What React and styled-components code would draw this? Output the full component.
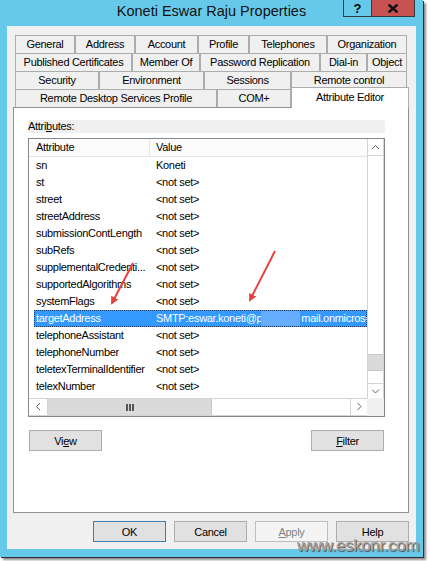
import React from 'react';
import styled, { createGlobalStyle } from 'styled-components';

const Global = createGlobalStyle`
  html, body { margin: 0; padding: 0; background: #ffffff; }
  body {
    font-family: "Liberation Sans", Arial, sans-serif;
    font-size: 11px;
    letter-spacing: -0.3px;
    color: #000;
  }
  u { text-decoration: underline; text-underline-offset: 1px; }
`;

const Page = styled.div`
  position: relative;
  width: 430px;
  height: 561px;
  overflow: hidden;
`;

const Window = styled.div`
  width: 423px;
  height: 557px;
  background: #67c9ea;
  display: flex;
  flex-direction: column;
  box-shadow: 1px 1px 0 #2e2e2e, 3px 3px 2px rgba(0, 0, 0, 0.45);
`;

const TitleBar = styled.div`
  height: 26px;
  flex: none;
  display: grid;
  grid-template-columns: 1fr auto 1fr;
  align-items: start;
`;

const Title = styled.div`
  padding-top: 1px;
  font-family: "Liberation Sans", Arial, sans-serif;
  font-size: 14.5px;
  letter-spacing: 0;
  line-height: 20px;
  color: #111;
  white-space: nowrap;
`;

const Controls = styled.div`
  justify-self: end;
  display: flex;
  margin-right: 8px;
`;

const CaptionButton = styled.div`
  box-sizing: border-box;
  height: 17px;
  border: 1px solid #2f3b40;
  border-top: none;
  display: flex;
  align-items: center;
  justify-content: center;
  font-weight: bold;
  font-size: 13px;
  letter-spacing: 0;
`;

const HelpButton = styled(CaptionButton)`
  width: 28px;
  border-right: none;
  background: transparent;
`;

const CloseButton = styled(CaptionButton)`
  width: 44px;
  background: #c75050;
`;

const Client = styled.div`
  flex: 1;
  margin: 0 7px 8px;
  background: #f0f0f0;
  padding: 9px 7px 0 6px;
  display: flex;
  flex-direction: column;
`;

const TabStrip = styled.div`
  margin-left: 2px;
  display: flex;
  flex-direction: column;
`;

const TabRow = styled.div`
  display: flex;
  height: 18px;
`;

const Tab = styled.div`
  box-sizing: border-box;
  width: ${(p) => p.$w}px;
  flex: none;
  border: 1px solid #acacac;
  border-bottom: none;
  background: ${(p) => (p.$active ? '#ffffff' : '#f0f0f0')};
  text-align: center;
  white-space: nowrap;
  line-height: ${(p) => (p.$active ? '19px' : '17px')};
  height: ${(p) => (p.$active ? '21px' : '18px')};
  margin-top: ${(p) => (p.$active ? '-2px' : '0')};
  position: ${(p) => (p.$active ? 'relative' : 'static')};
  z-index: ${(p) => (p.$active ? 2 : 'auto')};
`;

const Panel = styled.div`
  box-sizing: border-box;
  width: 396px;
  height: 406px;
  background: #ffffff;
  border: 1px solid #8f9090;
  padding: 12px 23px 0 14px;
  display: flex;
  flex-direction: column;
`;

const GroupLabel = styled.div`
  height: 13px;
  line-height: 13px;
  background: #f0f0f0;
`;

const ListView = styled.div`
  box-sizing: border-box;
  margin-top: 5px;
  height: 279px;
  border: 1px solid #828790;
  display: grid;
  grid-template-columns: 1fr 17px;
  grid-template-rows: 1fr 18px;
`;

const ListBody = styled.div`
  overflow: hidden;
  display: flex;
  flex-direction: column;
  background: #fff;
`;

const Header = styled.div`
  box-sizing: border-box;
  height: 18px;
  flex: none;
  display: flex;
  background: #fcfcfc;
  border-bottom: 1px solid #e5e5e5;
`;

const HeaderCell = styled.div`
  box-sizing: border-box;
  width: ${(p) => (p.$w ? `${p.$w}px` : 'auto')};
  flex: ${(p) => (p.$w ? 'none' : '1')};
  padding-left: ${(p) => (p.$w ? '7px' : '6px')};
  line-height: 17px;
  border-right: ${(p) => (p.$w ? '1px solid #e5e5e5' : 'none')};
`;

const Row = styled.div`
  height: 17px;
  flex: none;
  display: flex;
`;

const Item = styled.div`
  flex: 1;
  margin-left: 5px;
  display: flex;
  min-width: 0;
  box-sizing: border-box;
  background: ${(p) => (p.$selected ? '#3399ff' : 'transparent')};
  color: ${(p) => (p.$selected ? '#ffffff' : '#000')};
  outline: ${(p) => (p.$selected ? '1px dotted #1c3f78' : 'none')};
  outline-offset: -1px;
  line-height: 17px;
  white-space: nowrap;
`;

const AttrCell = styled.div`
  width: 116px;
  flex: none;
  box-sizing: border-box;
  padding-left: 2px;
  overflow: hidden;
`;

const ValueCell = styled.div`
  flex: 1;
  padding-left: 6px;
  overflow: hidden;
  display: flex;
  align-items: center;
`;

const Redacted = styled.span`
  display: inline-block;
  width: 39px;
  height: 15px;
  margin-left: -1px;
  margin-right: 1px;
  background: #66adff;
  filter: blur(0.6px);
  flex: none;
`;

const VScroll = styled.div`
  box-sizing: border-box;
  border-left: 1px solid #d4d4d4;
  border-right: 1px solid #d4d4d4;
  background: #fff;
  display: flex;
  flex-direction: column;
`;

const ArrowBox = styled.div`
  box-sizing: border-box;
  flex: none;
  width: ${(p) => (p.$w ? `${p.$w}px` : 'auto')};
  height: ${(p) => (p.$h ? `${p.$h}px` : 'auto')};
  display: flex;
  align-items: center;
  justify-content: center;
  border-${(p) => p.$edge}: 1px solid #d4d4d4;
`;

const VThumb = styled.div`
  box-sizing: border-box;
  flex: none;
  height: 17px;
  margin-top: auto;
  margin-bottom: 12px;
  background: #dadada;
  border-top: 1px solid #c8c8c8;
  border-bottom: 1px solid #c8c8c8;
`;

const HScroll = styled.div`
  box-sizing: border-box;
  border-top: 1px solid #d4d4d4;
  border-bottom: 1px solid #d4d4d4;
  background: #fff;
  display: flex;
`;

const HThumb = styled.div`
  box-sizing: border-box;
  width: 164px;
  flex: none;
  background: #dadada;
  border-right: 1px solid #c8c8c8;
  display: flex;
  align-items: center;
  justify-content: center;
`;

const HSpace = styled.div`
  flex: 1;
`;

const Corner = styled.div`
  background: #f0f0f0;
`;

const PanelButtons = styled.div`
  margin-top: 13px;
  display: flex;
  justify-content: space-between;
  padding: 0 1px;
`;

const Button = styled.div`
  box-sizing: border-box;
  width: 73px;
  height: 21px;
  display: flex;
  align-items: center;
  justify-content: center;
  background: ${(p) => (p.$disabled ? '#f4f4f4' : '#e1e1e1')};
  border: 1px solid
    ${(p) => (p.$default ? '#3c7fb1' : p.$disabled ? '#bfbfbf' : '#adadad')};
  color: ${(p) => (p.$disabled ? '#838383' : '#000')};
`;

const DialogButtons = styled.div`
  margin-top: 8px;
  display: flex;
  justify-content: flex-end;
  gap: 8px;
`;

const Watermark = styled.div`
  position: absolute;
  left: 297px;
  top: 537px;
  font-family: "Liberation Sans", Arial, sans-serif;
  font-size: 17px;
  line-height: 17px;
  letter-spacing: -0.4px;
  color: #a3a3a3;
  text-shadow: 1px 1px 1px #4a4a4a;
  white-space: nowrap;
`;

const Callouts = styled.svg`
  position: absolute;
  left: 0;
  top: 0;
  pointer-events: none;
`;

const tabRows = [
  [
    { label: 'General', w: 60 },
    { label: 'Address', w: 60 },
    { label: 'Account', w: 63 },
    { label: 'Profile', w: 51 },
    { label: 'Telephones', w: 78 },
    { label: 'Organization', w: 80 },
  ],
  [
    { label: 'Published Certificates', w: 117 },
    { label: 'Member Of', w: 68 },
    { label: 'Password Replication', w: 120 },
    { label: 'Dial-in', w: 47 },
    { label: 'Object', w: 40 },
  ],
  [
    { label: 'Security', w: 84 },
    { label: 'Environment', w: 105 },
    { label: 'Sessions', w: 87 },
    { label: 'Remote control', w: 116 },
  ],
  [
    { label: 'Remote Desktop Services Profile', w: 202 },
    { label: 'COM+', w: 74 },
    { label: 'Attribute Editor', w: 118, active: true },
  ],
];

const NOT_SET = '<not set>';

const attributes = [
  ['sn', 'Koneti'],
  ['st', NOT_SET],
  ['street', NOT_SET],
  ['streetAddress', NOT_SET],
  ['submissionContLength', NOT_SET],
  ['subRefs', NOT_SET],
  ['supplementalCredenti...', NOT_SET],
  ['supportedAlgorithms', NOT_SET],
  ['systemFlags', NOT_SET],
  ['targetAddress', null],
  ['telephoneAssistant', NOT_SET],
  ['telephoneNumber', NOT_SET],
  ['teletexTerminalIdentifier', NOT_SET],
  ['telexNumber', NOT_SET],
];

const Chevron = ({ dir }) => {
  const pts = {
    up: '0,4 3.5,0.5 7,4',
    down: '0,0.5 3.5,4 7,0.5',
  };
  if (dir === 'left' || dir === 'right') {
    const p = dir === 'left' ? '4,0 0.5,3.5 4,7' : '0.5,0 4,3.5 0.5,7';
    return (
      <svg width="5" height="8" viewBox="0 0 5 8">
        <polyline points={p} fill="none" stroke="#606060" strokeWidth="1" />
      </svg>
    );
  }
  return (
    <svg width="8" height="5" viewBox="0 0 8 5">
      <polyline points={pts[dir]} fill="none" stroke="#606060" strokeWidth="1" />
    </svg>
  );
};

const Grip = () => (
  <svg width="8" height="7" viewBox="0 0 8 7">
    <rect x="0" y="0" width="2" height="7" fill="#555" />
    <rect x="3" y="0" width="2" height="7" fill="#555" />
    <rect x="6" y="0" width="2" height="7" fill="#555" />
  </svg>
);

const CloseGlyph = () => (
  <svg width="10" height="9" viewBox="0 0 10 9">
    <path d="M0.5 0.5 L9.5 8.5 M9.5 0.5 L0.5 8.5" stroke="#111" strokeWidth="2.4" />
  </svg>
);

export default function App() {
  return (
    <>
      <Global />
      <Page>
        <Window>
          <TitleBar>
            <span />
            <Title>Koneti Eswar Raju Properties</Title>
            <Controls>
              <HelpButton>?</HelpButton>
              <CloseButton>
                <CloseGlyph />
              </CloseButton>
            </Controls>
          </TitleBar>
          <Client>
            <TabStrip>
              {tabRows.map((row, i) => (
                <TabRow key={i}>
                  {row.map((t) => (
                    <Tab key={t.label} $w={t.w} $active={t.active}>
                      {t.label}
                    </Tab>
                  ))}
                </TabRow>
              ))}
            </TabStrip>
            <Panel>
              <GroupLabel>
                Attri<u>b</u>utes:
              </GroupLabel>
              <ListView>
                <ListBody>
                  <Header>
                    <HeaderCell $w={121}>Attribute</HeaderCell>
                    <HeaderCell>Value</HeaderCell>
                  </Header>
                  {attributes.map(([name, value]) => (
                    <Row key={name}>
                      <Item $selected={value === null}>
                        <AttrCell>{name}</AttrCell>
                        <ValueCell>
                          {value === null ? (
                            <>
                              <span>SMTP:eswar.koneti@p</span>
                              <Redacted />
                              <span>mail.onmicrosoft.com</span>
                            </>
                          ) : (
                            value
                          )}
                        </ValueCell>
                      </Item>
                    </Row>
                  ))}
                </ListBody>
                <VScroll>
                  <ArrowBox $h={17} $edge="bottom">
                    <Chevron dir="up" />
                  </ArrowBox>
                  <VThumb />
                  <ArrowBox $h={15} $edge="top">
                    <Chevron dir="down" />
                  </ArrowBox>
                </VScroll>
                <HScroll>
                  <ArrowBox $w={19} $edge="right">
                    <Chevron dir="left" />
                  </ArrowBox>
                  <HThumb>
                    <Grip />
                  </HThumb>
                  <HSpace />
                  <ArrowBox $w={17} $edge="left">
                    <Chevron dir="right" />
                  </ArrowBox>
                </HScroll>
                <Corner />
              </ListView>
              <PanelButtons>
                <Button>
                  Vi<u>e</u>w
                </Button>
                <Button>
                  <u>F</u>ilter
                </Button>
              </PanelButtons>
            </Panel>
            <DialogButtons>
              <Button $default>OK</Button>
              <Button>Cancel</Button>
              <Button $disabled>
                <u>A</u>pply
              </Button>
              <Button>Help</Button>
            </DialogButtons>
          </Client>
        </Window>
        <Watermark>www.eskonr.com</Watermark>
        <Callouts width="430" height="561" viewBox="0 0 430 561">
          <defs>
            <marker
              id="head"
              markerWidth="8"
              markerHeight="8"
              refX="6"
              refY="4"
              orient="auto"
              markerUnits="userSpaceOnUse"
            >
              <path d="M0 0 L8 4 L0 8 Z" fill="#e8413f" />
            </marker>
          </defs>
          <line x1="133" y1="263" x2="112" y2="303" stroke="#e8413f" strokeWidth="2" markerEnd="url(#head)" />
          <line x1="275" y1="251" x2="250" y2="300" stroke="#e8413f" strokeWidth="2" markerEnd="url(#head)" />
        </Callouts>
      </Page>
    </>
  );
}
